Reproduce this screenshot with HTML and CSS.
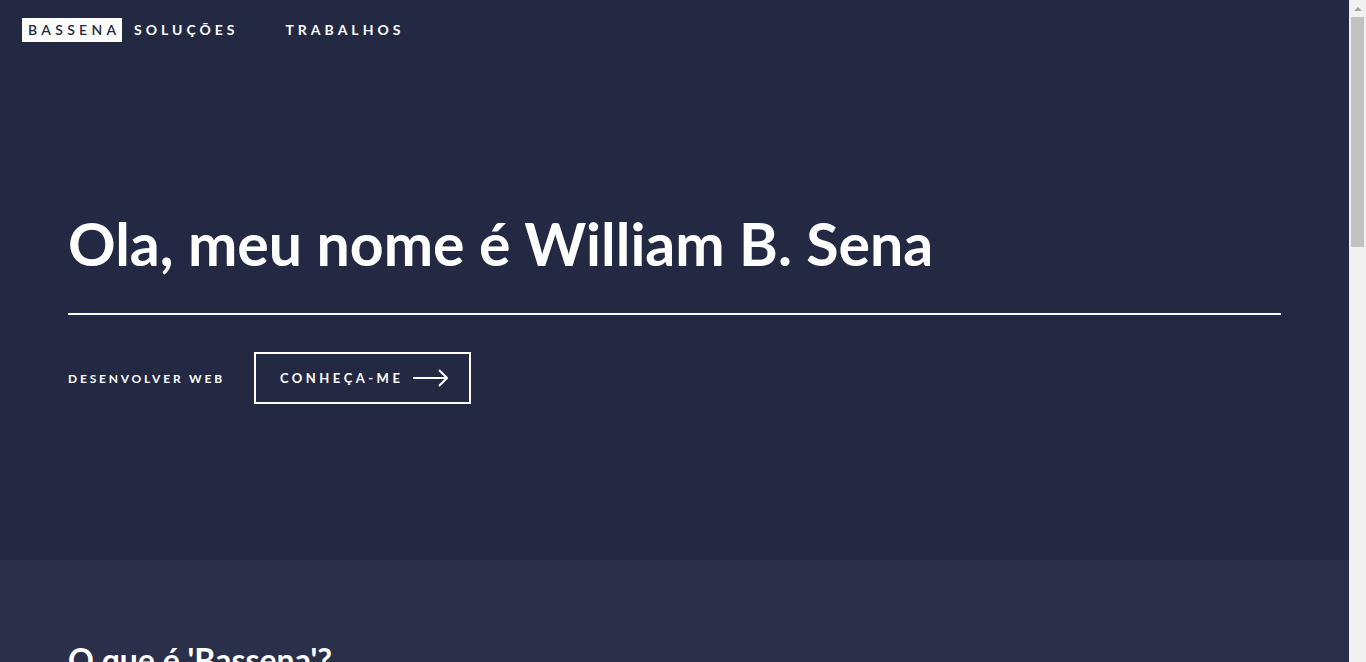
FILE: index.html
```html
<!DOCTYPE html>
<html lang="pt">
<head>
<meta charset="utf-8">
<title>Bassena</title>
<link rel="stylesheet" href="styles.css">
</head>
<body>
<div class="page">
  <header class="site-header">
    <a class="logo" href="#">BASSENA</a>
    <nav class="nav">
      <a href="#">SOLUÇÕES</a>
      <a href="#">TRABALHOS</a>
    </nav>
  </header>
  <section class="banner">
    <h1 class="banner-title">Ola, meu nome é William B. Sena</h1>
    <div class="rule"></div>
    <div class="banner-actions">
      <p class="tagline">DESENVOLVER WEB</p>
      <a class="button" href="#">CONHEÇA-ME
        <svg class="arrow" width="35" height="18" viewBox="0 0 35 18"><path d="M0 9H34M26 1L34 9L26 17" fill="none" stroke="#fff" stroke-width="2"/></svg>
      </a>
    </div>
  </section>
  <section class="about">
    <h2 class="about-title">O que é 'Bassena'?</h2>
    <p class="about-text">Texto sobre o projeto.</p>
  </section>
</div>
<div class="scrollbar" aria-hidden="true">
  <div class="scroll-up"></div>
  <div class="scroll-thumb"></div>
</div>
</body>
</html>
```
FILE: styles.css
```css
html, body { margin: 0; padding: 0; }
body {
  background: #2a2f4a;
  color: #fff;
  font-family: "Lato", "Liberation Sans", sans-serif;
}
a { color: #fff; text-decoration: none; }
.page {
  position: relative;
  margin-right: 17px;
}
.site-header {
  position: absolute;
  top: 0; left: 0; right: 0;
  display: flex;
  align-items: center;
  height: 59px;
  padding-left: 22px;
  font-weight: 700;
  font-size: 14px;
  letter-spacing: 4px;
}
.logo {
  background: #fff;
  color: #242943;
  height: 24px;
  width: 100px;
  box-sizing: border-box;
  display: flex;
  align-items: center;
  padding-left: 6px;
  margin-right: 12px;
  font-weight: 600;
  letter-spacing: 4.3px;
  overflow: hidden;
  white-space: nowrap;
}
.nav { display: flex; gap: 47px; }
.banner {
  background: #242943;
  height: 560px;
  box-sizing: border-box;
  padding: 204px 68px 0 68px;
}
.banner-title {
  margin: 0;
  font-size: 59px;
  font-weight: 700;
  line-height: 80px;
}
.rule {
  height: 2px;
  background: #fff;
  margin-top: 29px;
}
.banner-actions {
  display: flex;
  align-items: center;
  margin-top: 37px;
}
.tagline {
  margin: 0 29px 0 0;
  font-size: 12px;
  font-weight: 700;
  letter-spacing: 2.8px;
}
.button {
  display: flex;
  align-items: center;
  box-sizing: border-box;
  height: 52px;
  width: 217px;
  border: 2px solid #fff;
  padding-left: 24px;
  font-size: 13px;
  font-weight: 700;
  letter-spacing: 3.5px;
}
.arrow { margin-left: 10px; }
.about {
  padding: 80px 68px 200px;
  height: 1000px;
}
.about-title {
  margin: 0;
  font-size: 32px;
  font-weight: 700;
}
.scrollbar {
  position: fixed;
  top: 0; right: 0;
  width: 17px;
  height: 100vh;
  background: #f1f1f1;
}
.scroll-up {
  width: 0; height: 0;
  margin: 7px auto 0;
  border-left: 4px solid transparent;
  border-right: 4px solid transparent;
  border-bottom: 4px solid #a3a3a3;
}
.scroll-thumb {
  margin: 6px 2px 0;
  height: 230px;
  background: #c1c1c1;
}
```
